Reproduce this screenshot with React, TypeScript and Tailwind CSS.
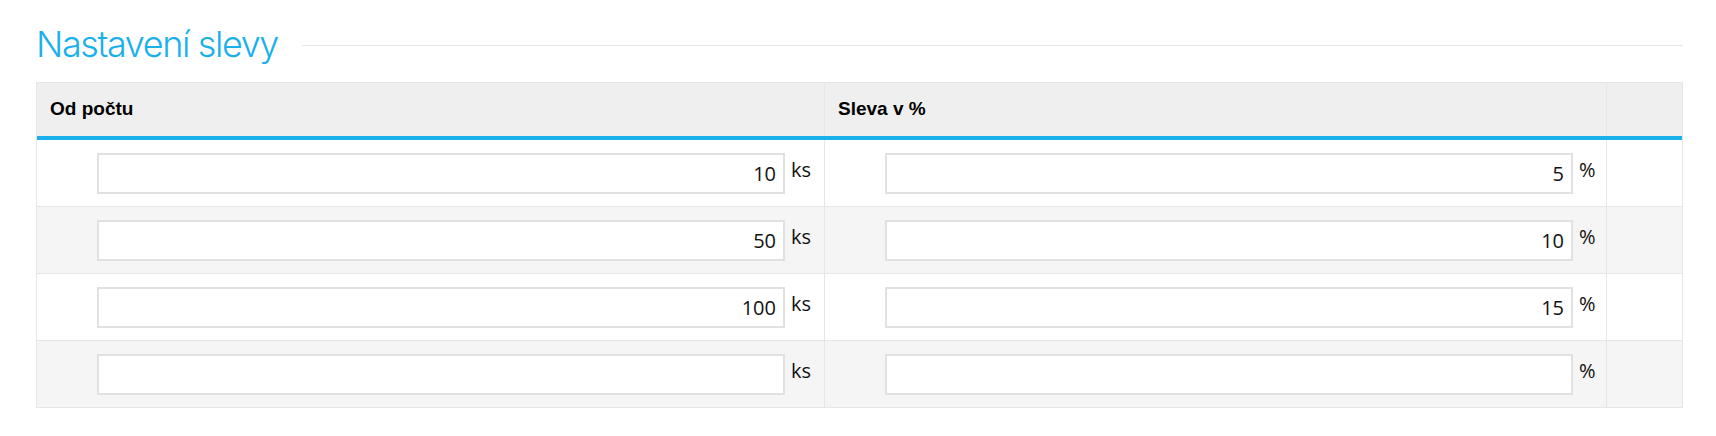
import React from "react";

const rows = [
  { count: "10", discount: "5" },
  { count: "50", discount: "10" },
  { count: "100", discount: "15" },
  { count: "", discount: "" },
];

function Cell({ value, unit }: { value: string; unit: string }) {
  return (
    <div className="flex items-center pl-[60px] border-r border-[#e6e6e6]">
      <input
        readOnly
        value={value}
        className="w-[688px] h-[41px] border-2 border-[#e1e1e1] bg-white text-right pr-[7px] text-[20px] text-[#111] outline-none"
        style={{ fontFamily: '"Open Sans", "Noto Sans", sans-serif' }}
      />
      <span
        className="ml-[6px] mb-[7px] text-[20px] text-[#111]"
        style={{ fontFamily: '"Open Sans", "Noto Sans", sans-serif' }}
      >
        {unit}
      </span>
    </div>
  );
}

export default function App() {
  return (
    <div className="w-[1716px] h-[436px] bg-white pl-[36px] pr-[33px] pt-[22px]">
      <div className="flex items-center">
        <h2
          className="text-[36px] leading-[44px] font-light tracking-[-1.4px] text-[#1ab0ec]"
          style={{ fontFamily: 'Inter, "Liberation Sans", sans-serif' }}
        >
          Nastavení slevy
        </h2>
        <div className="flex-1 h-px bg-[#e6e6e6] ml-[24px] mt-[2px]" />
      </div>
      <div
        className="mt-[16px] border border-[#e6e6e6]"
        style={{ fontFamily: '"Liberation Sans", Arial, sans-serif' }}
      >
        <div className="grid grid-cols-[788px_782px_1fr] h-[57px] bg-[#efefef] border-b-4 border-[#1ab0ec]">
          <div className="flex items-center pl-[13px] border-r border-[#e6e6e6] text-[19px] font-bold text-black">
            Od počtu
          </div>
          <div className="flex items-center pl-[13px] border-r border-[#e6e6e6] text-[19px] font-bold text-black">
            Sleva v %
          </div>
          <div />
        </div>
        {rows.map((r, i) => (
          <div
            key={i}
            className={`grid grid-cols-[788px_782px_1fr] ${
              i < rows.length - 1 ? "h-[67px] border-b border-[#e6e6e6]" : "h-[66px]"
            } ${i % 2 === 1 ? "bg-[#f5f5f5]" : "bg-white"}`}
          >
            <Cell value={r.count} unit="ks" />
            <Cell value={r.discount} unit="%" />
            <div />
          </div>
        ))}
      </div>
    </div>
  );
}
